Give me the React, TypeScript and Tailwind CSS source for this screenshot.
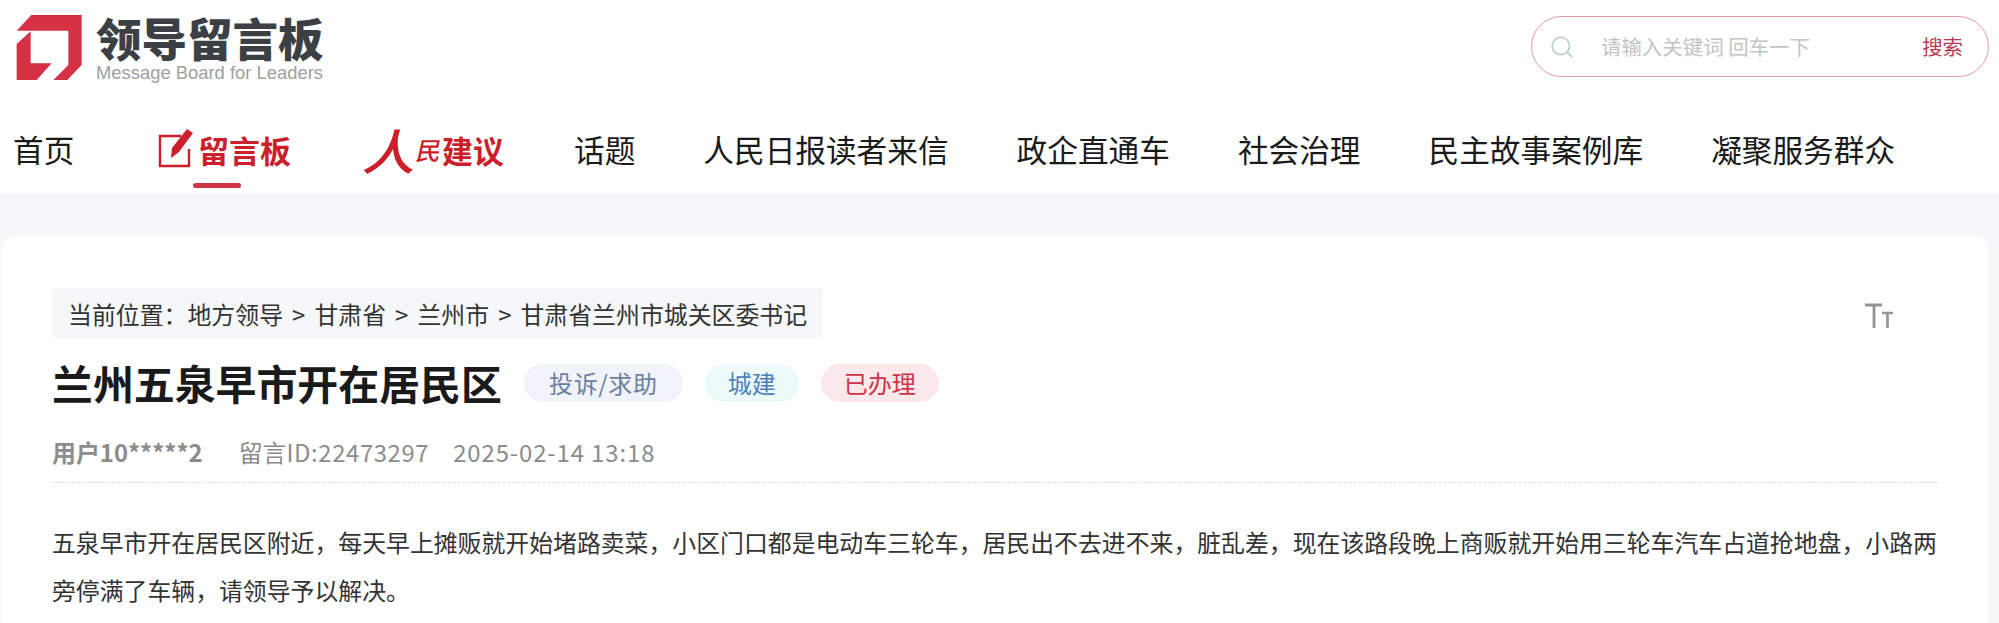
import { Search } from 'lucide-react';

const cjk = "font-['Noto_Sans_CJK_SC','Liberation_Sans',sans-serif]";

const navLinks = ['话题', '人民日报读者来信', '政企直通车', '社会治理', '民主故事案例库', '凝聚服务群众'];

function LogoMark() {
  return (
    <svg className="h-[80px] w-[80px] shrink-0" viewBox="0 0 240 240" fill="#d53345">
      <polygon points="64,15 215,15 215,165 172,210 130,210 175,165 175,62 20,62" />
      <polygon points="20,102 62,64 62,160 125,160 80,210 20,210" />
    </svg>
  );
}

function PencilMark() {
  return (
    <svg className="h-[44px] w-[38px] shrink-0" viewBox="0 0 38 44" fill="none">
      <path d="M24 9H3V39H32V22" stroke="#cc1f2b" strokeWidth="2.4" />
      <polygon points="14,31 15,21 30,2 36,6 22,25" fill="#cc1f2b" />
    </svg>
  );
}

function FontSizeIcon() {
  return (
    <svg className="mt-[5px] h-[26px] w-[30px]" viewBox="0 0 30 26" fill="none" stroke="#949494">
      <path d="M1 2H18M10 2V25" strokeWidth="2.8" />
      <path d="M18 10H29M23.5 10V25" strokeWidth="2.6" />
    </svg>
  );
}

function Tag({ label, className }: { label: string; className: string }) {
  return <span className={`flex h-[38px] items-center justify-center rounded-[19px] text-[24px] leading-none ${className}`}>{label}</span>;
}

export default function App() {
  return (
    <div className={`h-[623px] w-[1999px] overflow-hidden bg-[#f6f7f9] text-[#1a1a1a] ${cjk}`}>
      <header className="h-[193px] bg-white">
        <div className="flex h-[105px] items-start justify-between pr-[10px]">
          <div className="flex pl-[10px] pt-[10px]">
            <LogoMark />
            <div className="ml-[6px] flex flex-col pt-[4px]">
              <span className="h-[46px] text-[45.5px] font-black leading-[46px] whitespace-nowrap text-[#3c4044]">领导留言板</span>
              <span className="mt-[3px] font-['Liberation_Sans',sans-serif] text-[18.4px] leading-[20px] whitespace-nowrap text-[#a0a0a0]">
                Message Board for Leaders
              </span>
            </div>
          </div>
          <div className="mt-[16px] flex h-[61px] w-[458px] items-center rounded-[31px] border border-[#e39aa4] pl-[17px] pr-[25px]">
            <Search className="h-[26px] w-[26px] text-[#c5ccd3]" strokeWidth={1.7} />
            <span className="ml-[26px] text-[20.45px] whitespace-nowrap text-[#c4c4c4]">请输入关键词 回车一下</span>
            <span className="ml-auto text-[20.45px] whitespace-nowrap text-[#b93a4e]">搜索</span>
          </div>
        </div>
        <nav className="flex h-[88px] items-center gap-[68px] pl-[13px] text-[30.67px] whitespace-nowrap text-[#1a1a1a]">
          <a className="w-[61px]">首页</a>
          <a className="relative flex h-[88px] w-[154px] items-center pl-[15px]">
            <PencilMark />
            <span className="ml-[3px] text-[31px] font-bold leading-none text-[#cc1f2b]">留言板</span>
            <span className="absolute left-[51px] top-[78px] h-[5px] w-[48px] rounded-full bg-[#d13347]" />
          </a>
          <a className="flex w-[142px] items-center pl-[5px] font-medium text-[#cc1f2b]">
            <span className="w-[48px] -skew-x-12 scale-x-110 text-[48px] font-medium leading-none">人</span>
            <span className="w-[25px] -skew-x-12 text-[25px] font-medium leading-none">民</span>
            <span className="text-[31px] font-bold leading-none">建议</span>
          </a>
          {navLinks.map((link) => (
            <a key={link}>{link}</a>
          ))}
        </nav>
      </header>

      <main className="ml-px mt-[44px] w-[1987px] rounded-[14px] bg-white px-[51px] pb-10 pt-[51px]">
        <div className="flex items-center justify-between pr-[43px]">
          <div className="flex h-[51px] items-center rounded-[3px] bg-[#f6f7f9] px-[16px] text-[23.9px] [word-spacing:3.7px] whitespace-nowrap text-[#333333]">
            当前位置：地方领导 &gt; 甘肃省 &gt; 兰州市 &gt; 甘肃省兰州市城关区委书记
          </div>
          <FontSizeIcon />
        </div>

        <div className="mt-[25px] flex h-[38px] items-center">
          <h1 className="text-[40.9px] font-bold leading-none whitespace-nowrap text-[#1a1a1a]">兰州五泉早市开在居民区</h1>
          <div className="ml-[22px] flex gap-[22px]">
            <Tag label="投诉/求助" className="w-[159px] bg-[#f0f3f9] tracking-[0.6px] text-[#6b7fa3]" />
            <Tag label="城建" className="w-[94px] bg-[#ecfbf9] text-[#4d7fbd]" />
            <Tag label="已办理" className="w-[118px] bg-[#fae8ea] text-[#cf3347]" />
          </div>
        </div>

        <div className="mt-[30px] flex h-[40px] items-center text-[23.9px] whitespace-nowrap text-[#8c8c8c]">
          <span className="font-bold">用户10*****2</span>
          <span className="ml-[36px]">
            留言<span className="tracking-[0.6px]">ID:22473297</span>
          </span>
          <span className="ml-[24px] tracking-[0.9px]">2025-02-14 13:18</span>
        </div>

        <div className="mt-[10px] border-t border-dashed border-[#dddddd]" />

        <p className="mt-[35px] text-[23.87px] leading-[48px] text-[#333333]">
          五泉早市开在居民区附近，每天早上摊贩就开始堵路卖菜，小区门口都是电动车三轮车，居民出不去进不来，脏乱差，现在该路段晚上商贩就开始用三轮车汽车占道抢地盘，小路两旁停满了车辆，请领导予以解决。
        </p>
      </main>
    </div>
  );
}
